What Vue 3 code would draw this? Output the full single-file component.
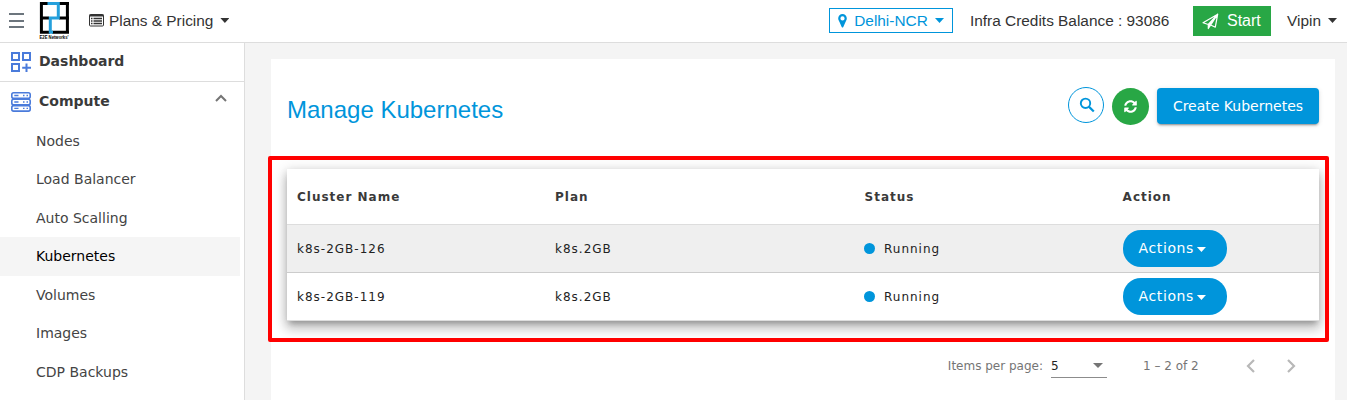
<template>
  <div class="page">
    <header class="topbar">
      <button class="menu-button" aria-label="Menu"><span></span><span></span><span></span></button>
      <svg class="logo" viewBox="0 0 32 40" width="32" height="40">
        <path d="M3.400 1V32.600M29.400 1V32.600M2 2.400H11M21 2.400H31M2 17H11M21 17H31M2 31.200H12M14 31.200H31" fill="none" stroke="#000" stroke-width="3" />
        <path d="M9.500 2.400H20.300V17H12.300V31.200H15" fill="none" stroke="#25a0dc" stroke-width="3" />
        <text x="1.500" y="37.500" textLength="29" lengthAdjust="spacingAndGlyphs" class="logo-text">E2E Networks'</text>
      </svg>
      <button class="plans">
        <svg width="15" height="13" viewBox="0 0 15 13">
          <rect x="0.500" y="0.500" width="14" height="11.500" rx="1" fill="none" stroke="#333" />
          <path d="M0.500 1.500H14.500" stroke="#333" stroke-width="2" />
          <path d="M2 4.500H3.500M2 7H3.500M2 9.500H3.500M4.500 4.500H13M4.500 7H13M4.500 9.500H13" stroke="#333" stroke-width="1.300" />
        </svg>
        <span>Plans &amp; Pricing</span>
        <i class="caret"></i>
      </button>
      <div class="spacer"></div>
      <button class="region">
        <svg width="9" height="14" viewBox="0 0 9 14">
          <path fill-rule="evenodd" d="M4.500 0A4.300 4.300 0 0 0 .2 4.300C.2 6 1 7 1.500 8L3.700 13Q4.500 14.200 5.300 13L7.500 8C8 7 8.800 6 8.800 4.300A4.300 4.300 0 0 0 4.500 0ZM4.500 2.300a2.100 2.100 0 1 1 0 4.200a2.100 2.100 0 1 1 0-4.200Z" fill="#0095db" />
        </svg>
        <span>Delhi-NCR</span>
        <i class="caret"></i>
      </button>
      <span class="credits">Infra Credits Balance : 93086</span>
      <button class="start">
        <svg width="17" height="17" viewBox="0 0 17 17">
          <path d="M1 9.700L15.700 1.200L13.300 14.200L8.700 12L6.300 15.500V11.500ZM6.300 11.500L15.700 1.200L8.700 12" fill="none" stroke="#fff" stroke-width="1.200" stroke-linejoin="round" />
          <path d="M6.300 11.500L15 2L8.700 12L6.300 15.500Z" fill="#fff" />
        </svg>
        <span>Start</span>
      </button>
      <button class="user"><span>Vipin</span><i class="caret"></i></button>
    </header>

    <div class="body">
      <nav class="sidebar">
        <div class="group dashboard">
          <svg width="20" height="20" viewBox="0 0 20 20" fill="none" stroke="#4a7bdb" stroke-width="2">
            <path d="M1 1H8V8H1ZM12 1H19V8H12ZM1 12H8V19H1Z" />
            <path d="M15.500 11.500V20M11.200 15.700H20" />
          </svg>
          <span>Dashboard</span>
        </div>
        <div class="group compute">
          <svg width="20" height="20" viewBox="0 0 20 20" fill="none" stroke="#4a7bdb" stroke-width="1.600">
            <rect x="0.800" y="0.800" width="18.400" height="5.500" rx="1.800" />
            <rect x="0.800" y="7.200" width="18.400" height="5.500" rx="1.800" />
            <rect x="0.800" y="13.600" width="18.400" height="5.500" rx="1.800" />
            <path d="M3.300 3.500H7.500M3.300 10H7.500M3.300 16.400H7.500M12 3.500H13.500M15.500 3.500H17M12 10H13.500M15.500 10H17M12 16.400H13.500M15.500 16.400H17" stroke-width="1.300" />
          </svg>
          <span>Compute</span>
          <svg class="chevron" width="12" height="8" viewBox="0 0 12 8">
            <path d="M1 7L6 2L11 7" fill="none" stroke="#757575" stroke-width="2" />
          </svg>
        </div>
        <ul>
          <li v-for="item in menuItems" :key="item" :class="{ active: item === activeItem }" @click="activeItem = item">{{ item }}</li>
        </ul>
      </nav>

      <main class="content">
        <section class="card">
          <div class="card-header">
            <h1>Manage Kubernetes</h1>
            <button class="search" aria-label="Search">
              <svg width="16" height="16" viewBox="0 0 16 16" fill="none" stroke="#0095db">
                <circle cx="6.500" cy="6.300" r="4.700" stroke-width="1.900" />
                <path d="M9.800 9.600L14.800 14.500" stroke-width="2.200" />
              </svg>
            </button>
            <button class="refresh" aria-label="Refresh">
              <svg width="13" height="13" viewBox="0 0 512 512" fill="#fff">
                <path d="M370.700 133.300C339.500 104 298.900 88 255.800 88c-77.500 0-144.300 53.200-162.800 126.900-1.300 5.400-6.100 9.100-11.700 9.100H24.100c-7.500 0-13.200-6.800-11.800-14.200C33.900 94.900 134.800 8 256 8c66.400 0 126.800 26.100 171.300 68.700L463 41c15.100-15.100 41-4.400 41 17v134c0 13.300-10.700 24-24 24H346c-21.400 0-32.100-25.900-17-41l41.700-41.700zM32 296h134c21.400 0 32.100 25.900 17 41l-41.800 41.800c31.300 29.300 71.800 45.300 114.900 45.200 77.400-.1 144.300-53.100 162.800-126.800 1.300-5.400 6.100-9.100 11.700-9.100h57.300c7.500 0 13.200 6.800 11.800 14.200C478.100 417.100 377.200 504 256 504c-66.400 0-126.800-26.100-171.300-68.700L49 471c-15.100 15.100-41 4.400-41-17V320c0-13.300 10.700-24 24-24z" />
              </svg>
            </button>
            <button class="create">Create Kubernetes</button>
          </div>

          <div class="table-wrap">
            <table>
              <thead>
                <tr>
                  <th class="name">Cluster Name</th>
                  <th class="plan">Plan</th>
                  <th class="status">Status</th>
                  <th>Action</th>
                </tr>
              </thead>
              <tbody>
                <tr v-for="cluster in clusters" :key="cluster.name">
                  <td>{{ cluster.name }}</td>
                  <td>{{ cluster.plan }}</td>
                  <td><div class="state"><i class="dot"></i>{{ cluster.status }}</div></td>
                  <td><button class="actions">Actions<i class="caret"></i></button></td>
                </tr>
              </tbody>
            </table>
            <div class="highlight"></div>
          </div>

          <div class="paginator">
            <span>Items per page:</span>
            <div class="page-size">5<i></i></div>
            <span class="range">1 – {{ clusters.length }} of {{ clusters.length }}</span>
            <svg class="prev" width="10" height="14" viewBox="0 0 10 14"><path d="M8 1L2 7L8 13" /></svg>
            <svg width="10" height="14" viewBox="0 0 10 14"><path d="M2 1L8 7L2 13" /></svg>
          </div>
        </section>
      </main>
    </div>
  </div>
</template>

<script setup>
import { ref } from "vue";

const activeItem = ref("Kubernetes");

const menuItems = ["Nodes", "Load Balancer", "Auto Scalling", "Kubernetes", "Volumes", "Images", "CDP Backups"];

const clusters = [
  { name: "k8s-2GB-126", plan: "k8s.2GB", status: "Running" },
  { name: "k8s-2GB-119", plan: "k8s.2GB", status: "Running" },
];
</script>

<style>
body {
  margin: 0;
  overflow: hidden;
}
</style>

<style scoped>
* {
  box-sizing: border-box;
}

button {
  font: inherit;
  color: inherit;
  background: none;
  border: none;
  padding: 0;
  cursor: pointer;
  display: flex;
  align-items: center;
}

svg {
  display: block;
  flex-shrink: 0;
}

.page {
  height: 400px;
  overflow: hidden;
  display: flex;
  flex-direction: column;
  background: #f4f4f4;
  font-family: "DejaVu Sans", sans-serif;
  color: #333;
}

.topbar {
  height: 43px;
  flex-shrink: 0;
  display: flex;
  align-items: center;
  padding-bottom: 1px;
  background: #fff;
  border-bottom: 1px solid #ddd;
  font-family: "Liberation Sans", Arial, sans-serif;
  font-size: 15.400px;
  line-height: 18px;
  white-space: nowrap;
}

.menu-button {
  margin-left: 9px;
  width: 15px;
  height: 15px;
  flex-direction: column;
  justify-content: space-between;
}

.menu-button span {
  width: 15px;
  height: 2px;
  background: #6c757d;
}

.logo {
  margin: 1px 0 0 14px;
  overflow: visible;
}

.logo-text {
  font-size: 5px;
  font-weight: bold;
  fill: #000;
}

.caret {
  width: 9px;
  height: 5px;
  background: currentColor;
  clip-path: polygon(0 0, 100% 0, 50% 100%);
}

.plans {
  margin-left: 19px;
}

.plans span {
  margin: 0 7px 0 5px;
}

.spacer {
  flex: 1;
}

.region {
  width: 124px;
  height: 25px;
  padding-left: 8px;
  border: 1px solid #0095db;
  color: #0095db;
}

.region span {
  width: 74px;
  margin: 0 7px 0 7px;
}

.credits {
  width: 199px;
  margin: 0 24px 0 17px;
}

.start {
  width: 78px;
  height: 30px;
  margin-top: 1px;
  padding-left: 9px;
  background: #28a745;
  color: #fff;
  font-size: 16px;
}

.start span {
  margin-left: 8px;
}

.user {
  width: 50px;
  margin: 0 10px 0 16px;
  justify-content: space-between;
}

.body {
  flex: 1;
  display: flex;
}

.sidebar {
  width: 245px;
  background: #fff;
  border-right: 1px solid #ddd;
}

.group {
  display: flex;
  align-items: center;
  padding-left: 11px;
  font-size: 14px;
  font-weight: bold;
  color: #3a3a3a;
}

.group span {
  margin-left: 8px;
}

.dashboard {
  height: 39px;
  border-bottom: 1px solid #ddd;
}

.dashboard span {
  margin-top: -2px;
}

.compute {
  height: 39.500px;
}

.compute span {
  margin-top: -1px;
}

.chevron {
  margin: -8px 17px 0 auto;
}

.sidebar ul {
  list-style: none;
  margin: 0;
  padding: 0;
}

.sidebar li {
  width: 240px;
  height: 38.600px;
  line-height: 38.600px;
  padding-left: 36px;
  font-size: 14px;
  color: #444;
}

.sidebar li.active {
  background: #f5f5f5;
  color: #000;
}

.content {
  flex: 1;
  padding: 16px 12px 0 26px;
}

.card {
  height: 400px;
  padding: 28px 16px 0;
  background: #fff;
}

.card-header {
  height: 82px;
  display: flex;
  align-items: flex-start;
}

h1 {
  flex: 1;
  margin: 9px 0 0;
  font: 400 24px/28px "Liberation Sans", Arial, sans-serif;
  color: #0095db;
}

.search,
.refresh {
  justify-content: center;
  border-radius: 50%;
}

.search {
  width: 36px;
  height: 36px;
  border: 1px solid #0095db;
  padding-left: 2px;
}

.refresh {
  width: 37px;
  height: 37px;
  margin: 1px 8px 0;
  padding: 0 1px 1px 0;
  background: #28a745;
}

.create {
  width: 162px;
  height: 36px;
  margin-top: 1px;
  justify-content: center;
  border-radius: 4px;
  background: #0095db;
  color: #fff;
  font-size: 14px;
  box-shadow: 0 3px 1px -2px rgba(0, 0, 0, 0.2), 0 2px 2px 0 rgba(0, 0, 0, 0.14), 0 1px 5px 0 rgba(0, 0, 0, 0.12);
}

.table-wrap {
  position: relative;
}

table {
  width: 100%;
  table-layout: fixed;
  border-collapse: separate;
  border-spacing: 0;
  background: #fff;
  font-size: 12px;
  letter-spacing: 1px;
  box-shadow: 0 5px 5px -3px rgba(0, 0, 0, 0.2), 0 8px 10px 1px rgba(0, 0, 0, 0.14), 0 3px 14px 2px rgba(0, 0, 0, 0.12), 0 2px 8px rgba(0, 0, 0, 0.1);
}

th,
td {
  padding: 0 0 0 10px;
  text-align: left;
  border-bottom: 1px solid #ddd;
}

th {
  height: 56px;
  color: #3a3a3a;
}

td {
  height: 48px;
  color: #222;
}

.name,
.status {
  width: 25%;
}

.plan {
  width: 30%;
}

tbody tr:first-child td {
  background: #efefef;
  border-bottom-color: #ccc;
}

.state {
  display: flex;
  align-items: center;
  margin-left: -0.600px;
}

.dot {
  width: 11px;
  height: 11px;
  margin-right: 9px;
  border-radius: 50%;
  background: #0095db;
}

.actions {
  width: 104px;
  height: 37px;
  padding: 0 0 2px 16px;
  border-radius: 18px;
  background: #0095db;
  color: #fff;
  font-size: 14px;
  letter-spacing: 0.600px;
}

.actions .caret {
  margin: 4px 0 0 3px;
}

/* red frame drawn over the table */
.highlight {
  position: absolute;
  inset: -13px -10px -21px -19px;
  border: 4px solid #f00;
  border-radius: 2px;
  pointer-events: none;
}

.paginator {
  height: 90px;
  display: flex;
  align-items: center;
  justify-content: flex-end;
  padding-right: 23px;
  font-size: 12px;
  color: #757575;
}

.page-size {
  width: 56px;
  height: 24px;
  margin: 0 36px 0 8px;
  padding-right: 4px;
  display: flex;
  align-items: center;
  justify-content: space-between;
  border-bottom: 1px solid #8c8c8c;
  color: #222;
}

.page-size i {
  border-top: 5px solid #757575;
  border-left: 5px solid transparent;
  border-right: 5px solid transparent;
}

.range {
  width: 56px;
  white-space: nowrap;
}

.paginator path {
  fill: none;
  stroke: #b8b8b8;
  stroke-width: 2.200;
}

.prev {
  margin: 0 30px 0 47px;
}
</style>
